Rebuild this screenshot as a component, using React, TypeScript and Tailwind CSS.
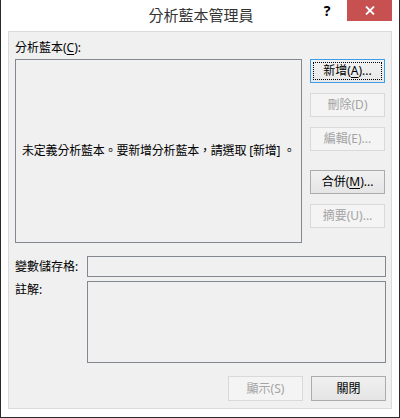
import React from "react";

const FONT = { fontFamily: '"Noto Sans", "Noto Sans CJK TC", sans-serif' };

function Btn({
  children,
  disabled,
  def,
  className = "",
}: {
  children: React.ReactNode;
  disabled?: boolean;
  def?: boolean;
  className?: string;
}) {
  if (def) {
    return (
      <div
        className={`w-[75px] h-[24px] border border-[#3c9de8] bg-gradient-to-b from-[#f2f2f2] to-[#e8e8e8] p-[2px] ${className}`}
      >
        <div className="w-full h-full border border-dotted border-black flex items-center justify-center text-[12px] leading-none text-black">
          {children}
        </div>
      </div>
    );
  }
  return (
    <div
      className={`w-[75px] h-[24px] border flex items-center justify-center text-[12px] leading-none ${
        disabled
          ? "border-[#d9d9d9] bg-[#f4f4f4] text-[#a3a3a3]"
          : "border-[#acacac] bg-gradient-to-b from-[#f0f0f0] to-[#e5e5e5] text-black"
      } ${className}`}
    >
      {children}
    </div>
  );
}

export default function App() {
  return (
    <div
      className="w-[400px] h-[418px] bg-white border-l border-r border-b border-[#2b2b2b] flex flex-col"
      style={FONT}
    >
      {/* Title bar */}
      <div className="h-[31px] flex items-start relative">
        <div className="flex-1 h-full flex items-center justify-center text-[15px] text-[#333333] pl-[2px] pb-[1px]">
          分析藍本管理員
        </div>
        <div className="absolute right-[7px] top-0 flex items-start">
          <div className="w-[18px] h-[21px] mr-[11px] flex items-center justify-center text-[14px] font-bold text-black leading-none">
            ?
          </div>
          <div className="w-[45px] h-[21px] bg-[#c75050] flex items-center justify-center">
            <svg width="10" height="9" viewBox="0 0 10 9">
              <path d="M1 0.5 L9 8.5 M9 0.5 L1 8.5" stroke="white" strokeWidth="1.8" />
            </svg>
          </div>
        </div>
      </div>

      {/* Client area */}
      <div className="mx-[7px] h-[378px] border border-[#dadada] bg-[#f0f0f0] pl-[6px] pt-[8px] text-[12px] text-black">
        <div className="h-[16px] leading-[16px]">
          分析藍本(<span className="underline underline-offset-2">C</span>):
        </div>
        <div className="flex mt-[3px]">
          <div className="w-[287px] h-[184px] border border-[#828790] flex items-center justify-center text-[12px] tracking-[-0.2px]">
            未定義分析藍本。要新增分析藍本，請選取 [新增] 。
          </div>
          <div className="ml-[8px] flex flex-col">
            <Btn def>
              新增(<span className="underline underline-offset-2">A</span>)...
            </Btn>
            <Btn disabled className="mt-[10px]">
              刪除(D)
            </Btn>
            <Btn disabled className="mt-[10px]">
              編輯(E)...
            </Btn>
            <Btn className="mt-[19px]">
              合併(<span className="underline underline-offset-2">M</span>)...
            </Btn>
            <Btn disabled className="mt-[10px]">
              摘要(U)...
            </Btn>
          </div>
        </div>
        <div className="flex items-center mt-[13px]">
          <div className="w-[72px] leading-[16px]">變數儲存格:</div>
          <div className="w-[299px] h-[21px] border border-[#828790]" />
        </div>
        <div className="flex items-start mt-[4px]">
          <div className="w-[72px] leading-[16px] pt-[1px]">註解:</div>
          <div className="w-[299px] h-[82px] border border-[#828790]" />
        </div>
        <div className="flex justify-end mt-[13px] pr-[5px]">
          <Btn disabled className="h-[25px]">
            顯示(S)
          </Btn>
          <Btn className="ml-[8px] h-[25px]">關閉</Btn>
        </div>
      </div>
    </div>
  );
}
